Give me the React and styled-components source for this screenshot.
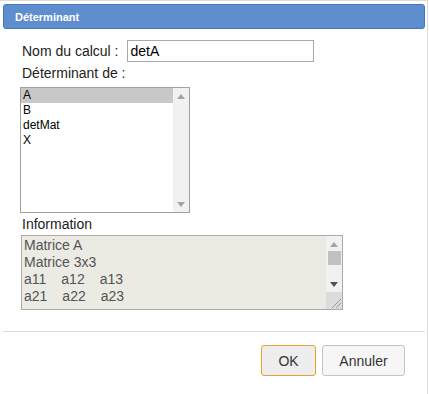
import React from "react";
import styled, { createGlobalStyle } from "styled-components";

const Global = createGlobalStyle`
  html, body { margin: 0; padding: 0; background: #fff; }
  body { font-family: "Liberation Sans", Arial, sans-serif; }
  * { box-sizing: border-box; }
`;

const Dialog = styled.div`
  width: 428px;
  height: 394px;
  border-top: 1px solid #dddddd;
  border-right: 1px solid #dddddd;
  padding: 3px 2px 0 3px;
  display: flex;
  flex-direction: column;
`;

const TitleBar = styled.div`
  height: 25px;
  background: #5f8ecf;
  border: 1px solid #4477c0;
  border-radius: 3px;
  display: flex;
  align-items: center;
  padding-left: 11px;
  color: #fff;
  font-weight: bold;
  font-size: 11px;
`;

const Content = styled.div`
  padding: 11px 0 0 18px;
  display: flex;
  flex-direction: column;
  align-items: flex-start;
`;

const FieldRow = styled.div`
  display: flex;
  align-items: center;
  gap: 9px;
`;

const Label = styled.div`
  font-size: 14px;
  line-height: 16px;
  color: #222;
  padding-left: 1px;
  margin-top: ${(p) => p.$top || 0}px;
`;

const TextInput = styled.div`
  width: 187px;
  height: 22px;
  border: 1px solid #a9a9a9;
  padding: 0 2px;
  font-size: 14px;
  line-height: 20px;
  color: #000;
`;

const ListBox = styled.div`
  margin-top: 6px;
  margin-left: -1px;
  width: 170px;
  height: 126px;
  border: 1px solid #a0a0a0;
  display: flex;
`;

const Options = styled.div`
  flex: 1;
  display: flex;
  flex-direction: column;
`;

const Option = styled.div`
  height: 15px;
  line-height: 15px;
  font-size: 12px;
  padding-left: 2px;
  color: #000;
  background: ${(p) => (p.$selected ? "#c8c8c8" : "transparent")};
`;

const ScrollBar = styled.div`
  width: 16px;
  background: #f1f1f1;
  display: flex;
  flex-direction: column;
  align-items: center;
  justify-content: ${(p) => (p.$stack ? "flex-start" : "space-between")};
  flex: ${(p) => (p.$stack ? 1 : "none")};
`;

const ArrowBox = styled.div`
  height: 16px;
  width: 100%;
  display: flex;
  align-items: center;
  justify-content: center;
`;

const Track = styled.div`
  flex: 1;
`;

const Thumb = styled.div`
  width: 13px;
  height: 14px;
  background: #c1c1c1;
  margin-top: -1px;
`;

const InfoBox = styled.div`
  margin-top: 3px;
  width: 322px;
  height: 75px;
  border: 1px solid #a9a9a9;
  background: #ebebe4;
  display: flex;
`;

const InfoText = styled.div`
  flex: 1;
  padding: 1px 0 0 2px;
  font-size: 14px;
  line-height: 17px;
  color: #545454;
`;

const InfoLine = styled.div`
  display: flex;
  gap: 15px;
`;

const InfoSide = styled.div`
  width: 16px;
  display: flex;
  flex-direction: column;
`;

const Corner = styled.div`
  height: 17px;
  background: #dcdcdc;
  display: flex;
  align-items: flex-end;
  justify-content: flex-end;
`;

const Separator = styled.div`
  margin-top: 21px;
  height: 1px;
  background: #dddddd;
`;

const ButtonPane = styled.div`
  display: flex;
  justify-content: flex-end;
  gap: 6px;
  padding: 13px 20px 0 0;
`;

const Button = styled.div`
  height: 31px;
  width: ${(p) => p.$w}px;
  border: 1px solid ${(p) => (p.$focus ? "#e8a030" : "#c5c5c5")};
  background: ${(p) => (p.$focus ? "#ededed" : "#f6f6f6")};
  border-radius: 3px;
  display: flex;
  align-items: center;
  justify-content: center;
  font-size: 14px;
  color: #333;
`;

const Up = ({ color }) => (
  <svg width="8" height="5" viewBox="0 0 8 5">
    <polygon points="0,5 8,5 4,0" fill={color} />
  </svg>
);
const Down = ({ color }) => (
  <svg width="8" height="5" viewBox="0 0 8 5">
    <polygon points="0,0 8,0 4,5" fill={color} />
  </svg>
);

const info = [["Matrice A"], ["Matrice 3x3"], ["a11", "a12", "a13"], ["a21", "a22", "a23"]];

export default function App() {
  return (
    <>
      <Global />
      <Dialog>
        <TitleBar>Déterminant</TitleBar>
        <Content>
          <FieldRow>
            <Label>Nom du calcul :</Label>
            <TextInput>detA</TextInput>
          </FieldRow>
          <Label $top={3}>Déterminant de :</Label>
          <ListBox>
            <Options>
              <Option $selected>A</Option>
              <Option>B</Option>
              <Option>detMat</Option>
              <Option>X</Option>
            </Options>
            <ScrollBar>
              <ArrowBox><Up color="#a3a3a3" /></ArrowBox>
              <ArrowBox><Down color="#a3a3a3" /></ArrowBox>
            </ScrollBar>
          </ListBox>
          <Label $top={3}>Information</Label>
          <InfoBox>
            <InfoText>
              {info.map((cells, i) => (
                <InfoLine key={i}>
                  {cells.map((c, j) => (
                    <span key={j}>{c}</span>
                  ))}
                </InfoLine>
              ))}
            </InfoText>
            <InfoSide>
              <ScrollBar $stack>
                <ArrowBox><Up color="#a3a3a3" /></ArrowBox>
                <Thumb />
                <Track />
                <ArrowBox><Down color="#505050" /></ArrowBox>
              </ScrollBar>
              <Corner>
                <svg width="12" height="12" viewBox="0 0 12 12">
                  <line x1="2" y1="11" x2="11" y2="2" stroke="#9a9a9a" strokeWidth="1" />
                  <line x1="6" y1="11" x2="11" y2="6" stroke="#9a9a9a" strokeWidth="1" />
                </svg>
              </Corner>
            </InfoSide>
          </InfoBox>
        </Content>
        <Separator />
        <ButtonPane>
          <Button $w={55} $focus>OK</Button>
          <Button $w={83}>Annuler</Button>
        </ButtonPane>
      </Dialog>
    </>
  );
}
